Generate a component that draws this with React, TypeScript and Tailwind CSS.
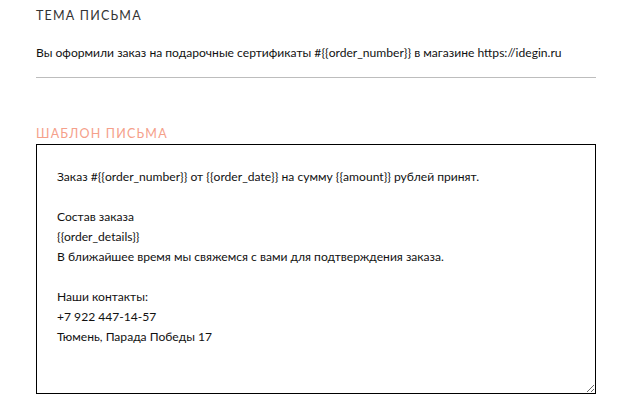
export default function App() {
  const font = { fontFamily: '"Lato", "Noto Sans", sans-serif' };
  return (
    <div className="min-h-screen bg-white px-9 text-[#222]" style={font}>
      <div className="w-[560px]">
        {/* Тема письма */}
        <div className="pt-[7px] text-[12.5px] uppercase tracking-[1.2px] text-[#333]">Тема письма</div>
        <div className="mt-[17px] border-b border-[#bdbdbd] pb-[14px] text-[12.1px] leading-5 text-[#111]">
          Вы оформили заказ на подарочные сертификаты #{"{{order_number}}"} в магазине https://idegin.ru
        </div>

        {/* Шаблон письма */}
        <div className="mt-[47px] text-[12.5px] uppercase tracking-[1.2px] text-[#f5a08a]">Шаблон письма</div>
        <textarea
          className="block h-[250px] w-[560px] resize-y border-[1.5px] border-black px-5 pt-[22px] text-[12.1px] leading-5 text-[#111] outline-none"
          style={font}
          defaultValue={
            "Заказ #{{order_number}} от {{order_date}} на сумму {{amount}} рублей принят.\n\nСостав заказа\n{{order_details}}\nВ ближайшее время мы свяжемся с вами для подтверждения заказа.\n\nНаши контакты:\n+7 922 447-14-57\nТюмень, Парада Победы 17"
          }
        />
      </div>
    </div>
  );
}
